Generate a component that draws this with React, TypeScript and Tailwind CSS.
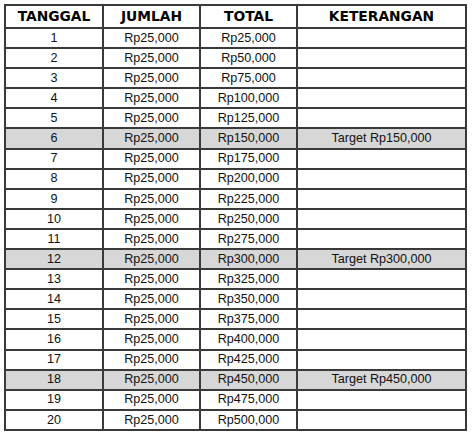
import React from "react";

const rows = Array.from({ length: 20 }, (_, i) => {
  const n = i + 1;
  const total = (25000 * n).toLocaleString("en-US");
  const note = n === 6 || n === 12 || n === 18 ? `Target Rp${total}` : "";
  return { n, total: `Rp${total}`, note };
});

const cell = "border-2 border-[#3a3a3a] p-0 text-center text-[12.6px] leading-none";

export default function App() {
  return (
    <div className="w-[474px] h-[439px] bg-white pt-[4px] pl-[4px]">
      <table
        className="border-collapse table-fixed w-[461px] text-[#111]"
        style={{ fontFamily: '"Liberation Sans", Arial, sans-serif' }}
      >
        <colgroup>
          <col className="w-[98px]" />
          <col className="w-[97px]" />
          <col className="w-[97px]" />
          <col className="w-[169px]" />
        </colgroup>
        <thead>
          <tr className="h-[23px]">
            {["TANGGAL", "JUMLAH", "TOTAL", "KETERANGAN"].map((h) => (
              <th
                key={h}
                className="border-2 border-[#3a3a3a] p-0 text-center font-bold text-[13.8px] leading-none text-black"
                style={{ fontFamily: '"DejaVu Sans", Verdana, sans-serif' }}
              >
                {h}
              </th>
            ))}
          </tr>
        </thead>
        <tbody>
          {rows.map((r) => (
            <tr
              key={r.n}
              className={`h-[20.1px] ${r.note ? "bg-[#d7d7d7]" : "bg-white"}`}
            >
              <td className={cell}>{r.n}</td>
              <td className={cell}>Rp25,000</td>
              <td className={cell}>{r.total}</td>
              <td className={cell}>{r.note}</td>
            </tr>
          ))}
        </tbody>
      </table>
    </div>
  );
}
